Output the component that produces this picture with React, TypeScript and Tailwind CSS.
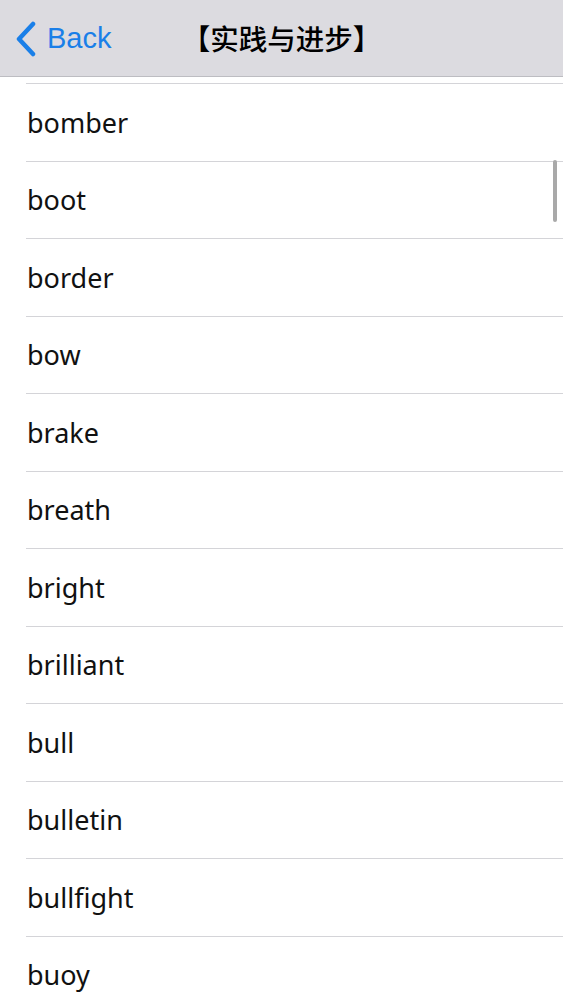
import React from "react";

const words = [
  "bomber",
  "boot",
  "border",
  "bow",
  "brake",
  "breath",
  "bright",
  "brilliant",
  "bull",
  "bulletin",
  "bullfight",
  "buoy",
];

export default function App() {
  return (
    <div
      className="relative w-[563px] h-[1000px] overflow-hidden bg-white"
      style={{ fontFamily: '"Noto Sans", "Noto Sans CJK SC", sans-serif' }}
    >
      <div className="relative h-[77px] bg-[#dcdbe0] border-b border-[#bdbdc2] flex items-center">
        <div className="flex items-center pl-[14px] text-[#1a7fe8]">
          <svg width="24" height="36" viewBox="0 0 24 36" className="mt-[2px]">
            <path
              d="M19 3 L5 18 L19 33"
              fill="none"
              stroke="#1a7fe8"
              strokeWidth="4.5"
              strokeLinecap="round"
              strokeLinejoin="round"
            />
          </svg>
          <span
            className="ml-[9px] text-[29px] leading-none"
            style={{ fontFamily: '"Liberation Sans", sans-serif' }}
          >
            Back
          </span>
        </div>
        <div className="absolute inset-0 flex items-center justify-center pointer-events-none">
          <span
            className="text-[28.5px] leading-none text-black font-medium"
            style={{ fontFamily: '"Noto Sans CJK SC", sans-serif' }}
          >
            【实践与进步】
          </span>
        </div>
      </div>
      <div className="h-[6px]" />
      <div className="flex flex-col">
        {words.map((w) => (
          <div
            key={w}
            className="h-[77.5px] ml-[26px] border-t border-[#d4d4d8] flex items-center shrink-0"
          >
            <span className="ml-[1px] text-[27px] leading-none text-[#111]">{w}</span>
          </div>
        ))}
      </div>
      <div className="absolute left-[553px] top-[160px] w-[4px] h-[62px] rounded-full bg-[#a9a9a9]" />
    </div>
  );
}
